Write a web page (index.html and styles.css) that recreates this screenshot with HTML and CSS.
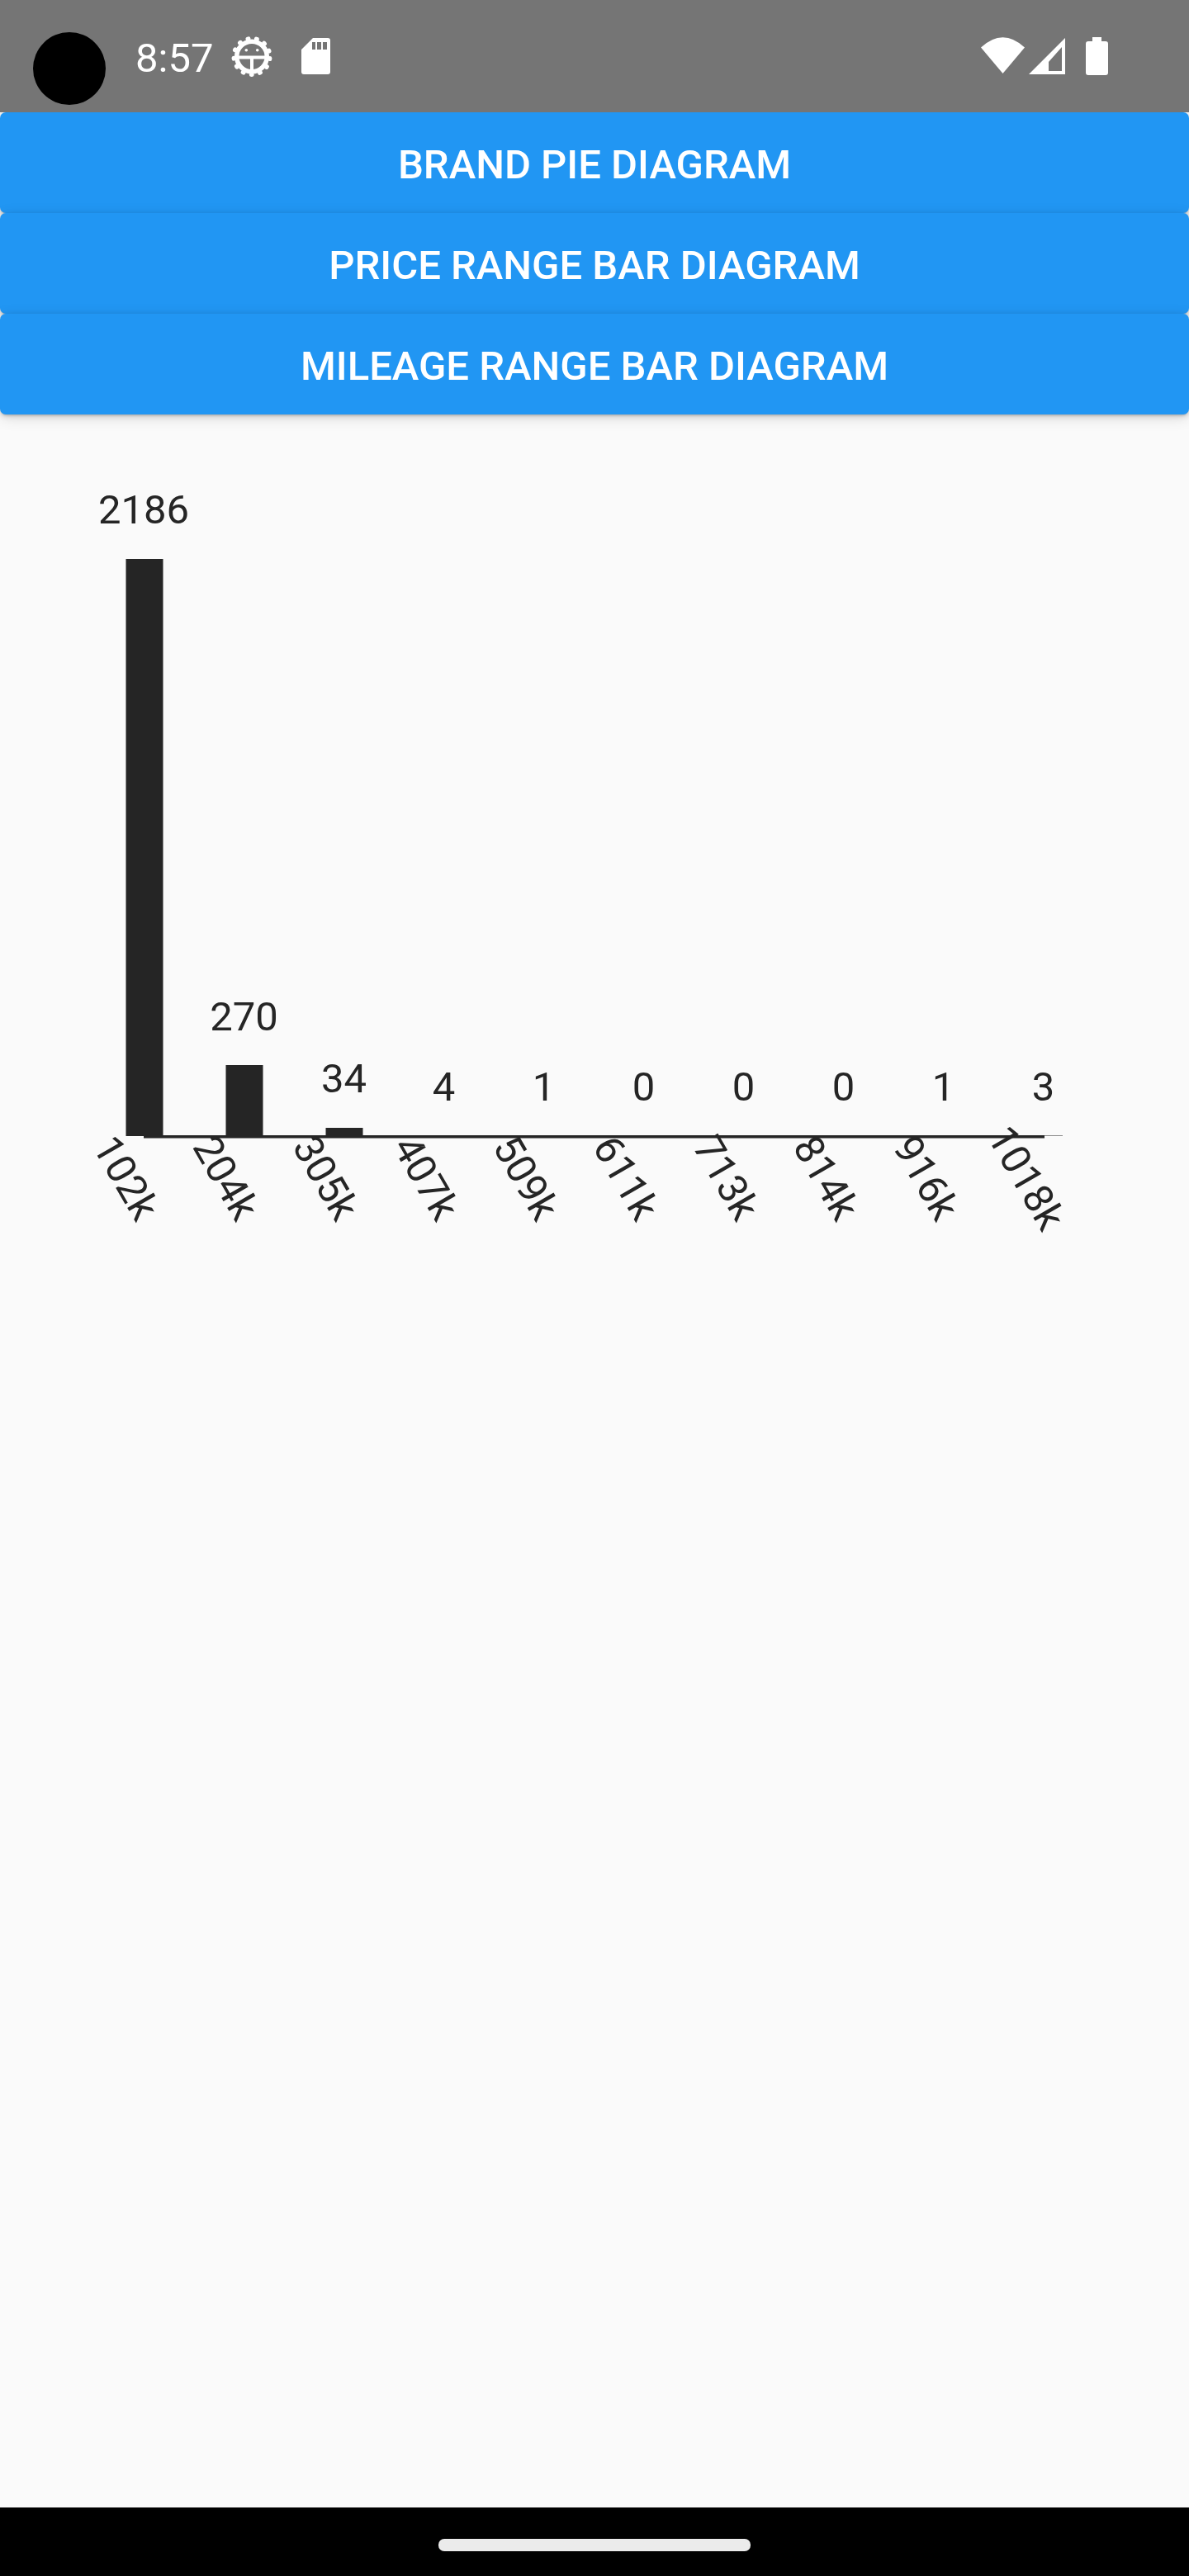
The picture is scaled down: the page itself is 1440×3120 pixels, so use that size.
FILE: index.html
```html
<!DOCTYPE html>
<html lang="en">
<head>
<meta charset="utf-8">
<title>Car statistics</title>
<link rel="stylesheet" href="styles.css">
</head>
<body>
<div class="screen">
  <header class="status-bar">
    <div class="status-left">
      <span class="time">8:57</span>
      <svg class="icon-debug" viewBox="0 0 50 50" width="50" height="50">
        <circle class="ring" cx="25" cy="24.500" r="18.300"/>
        <circle class="teeth" cx="25" cy="24.500" r="22"/>
        <path class="inner" d="M8 25.500H42M25 25.500V42"/>
        <circle class="dot" cx="18.300" cy="16.800" r="1.800"/>
        <circle class="dot" cx="31.700" cy="16.800" r="1.800"/>
      </svg>
      <svg class="icon-sd" viewBox="0 0 35 44" width="35" height="44">
        <path class="solid" fill-rule="evenodd" d="M14 0H32Q35 0 35 3V41Q35 44 32 44H3Q0 44 0 41V14ZM13 5V14H17V5ZM19 5V14H24V5ZM26 5V14H31V5Z"/>
      </svg>
    </div>
    <div class="status-right">
      <svg class="icon-wifi" viewBox="0 0 53 44" width="53" height="44">
        <path class="solid" d="M0 12.500Q26.500 -12 53 12.500L26.500 44Z"/>
      </svg>
      <svg class="icon-signal" viewBox="0 0 44 44" width="44" height="44">
        <path class="solid" fill-rule="evenodd" d="M44 0V44H0ZM40 11 24 29V40H40Z"/>
      </svg>
      <svg class="icon-battery" viewBox="0 0 27 46" width="27" height="46">
        <path class="solid" d="M8 0H19V5H24Q27 5 27 8V43Q27 46 24 46H3Q0 46 0 43V8Q0 5 3 5H8Z"/>
      </svg>
    </div>
    <div class="camera"></div>
  </header>

  <nav class="actions">
    <button class="action">BRAND PIE DIAGRAM</button>
    <button class="action">PRICE RANGE BAR DIAGRAM</button>
    <button class="action">MILEAGE RANGE BAR DIAGRAM</button>
  </nav>

  <main class="chart-area">
    <svg class="chart" viewBox="0 502 1440 2535" width="1440" height="2535">
      <rect class="bar" x="152.500" y="677" width="45" height="699"/>
      <rect class="bar" x="273.500" y="1290" width="45" height="86"/>
      <rect class="bar" x="394.500" y="1366" width="45" height="10"/>

      <rect class="axis-thin" x="1265" y="1375" width="22" height="1"/>
      <rect class="axis" x="174" y="1375" width="1091" height="3"/>
      <rect class="axis-edge" x="174" y="1378" width="1091" height="1"/>

      <text class="value" x="174" y="634">2186</text>
      <text class="value" x="295.500" y="1248">270</text>
      <text class="value" x="416.500" y="1323">34</text>
      <text class="value" x="537.500" y="1333">4</text>
      <text class="value" x="658.500" y="1333">1</text>
      <text class="value" x="779.500" y="1333">0</text>
      <text class="value" x="900.500" y="1333">0</text>
      <text class="value" x="1021.500" y="1333">0</text>
      <text class="value" x="1142.500" y="1333">1</text>
      <text class="value" x="1263.500" y="1333">3</text>

      <text class="tick" transform="translate(138 1435) rotate(60)">102k</text>
      <text class="tick" transform="translate(259 1435) rotate(60)">204k</text>
      <text class="tick" transform="translate(380 1435) rotate(60)">305k</text>
      <text class="tick" transform="translate(501.500 1435) rotate(60)">407k</text>
      <text class="tick" transform="translate(622.500 1435) rotate(60)">509k</text>
      <text class="tick" transform="translate(743.500 1435) rotate(60)">611k</text>
      <text class="tick" transform="translate(865 1435) rotate(60)">713k</text>
      <text class="tick" transform="translate(986 1435) rotate(60)">814k</text>
      <text class="tick" transform="translate(1107 1435) rotate(60)">916k</text>
      <text class="tick" transform="translate(1228.500 1435) rotate(60)">1018k</text>
    </svg>
  </main>

  <footer class="nav-bar">
    <div class="home-handle"></div>
  </footer>
</div>
</body>
</html>
```

FILE: styles.css
```css
* {
  box-sizing: border-box;
}

html,
body {
  margin: 0;
  padding: 0;
}

body {
  background: #fafafa;
  font-family: Roboto, "Liberation Sans", sans-serif;
}

.screen {
  width: 1440px;
  height: 3120px;
  display: flex;
  flex-direction: column;
  overflow: hidden;
}

/* status bar */
.status-bar {
  position: relative;
  flex: 0 0 136px;
  background: #757575;
  display: flex;
  justify-content: space-between;
  padding: 0 98px 0 164px;
  color: #fff;
}

.camera {
  position: absolute;
  left: 40px;
  top: 39px;
  width: 88px;
  height: 88px;
  border-radius: 50%;
  background: #000;
}

.status-left {
  display: flex;
  align-items: flex-start;
  padding-top: 44px;
}

.time {
  font-size: 49px;
  line-height: 50px;
  width: 116px;
  margin-top: 2px;
}

.icon-debug {
  margin-right: 35px;
}

.icon-sd {
  margin-top: 2px;
}

.status-right {
  display: flex;
  align-items: flex-start;
  padding-top: 45px;
}

.icon-wifi {
  margin-right: 5px;
}

.icon-signal {
  margin-top: 1px;
  margin-right: 25px;
}

.solid {
  fill: #fff;
}

.ring {
  fill: none;
  stroke: #fff;
  stroke-width: 5.500px;
}

.teeth {
  fill: none;
  stroke: #fff;
  stroke-width: 5px;
  stroke-linecap: round;
  stroke-dasharray: 1 9.633;
  stroke-dashoffset: -2.160px;
}

.inner {
  fill: none;
  stroke: #fff;
  stroke-width: 4px;
}

.dot {
  fill: #fff;
}

/* buttons */
.actions {
  display: flex;
  flex-direction: column;
}

.action {
  display: block;
  width: 100%;
  height: 122px;
  margin: 0;
  padding: 4px 0 0;
  border: 0;
  border-radius: 7px;
  background: #2196f3;
  color: #fff;
  font-family: Roboto, "Liberation Sans", sans-serif;
  font-size: 49px;
  font-weight: 500;
  text-align: center;
  box-shadow: 0 3px 3px -2px rgba(0, 0, 0, 0.2), 0 2px 7px 0 rgba(0, 0, 0, 0.14), 0 4px 18px 0 rgba(0, 0, 0, 0.12);
}

/* chart */
.chart-area {
  flex: 1 1 auto;
  min-height: 0;
}

.chart {
  display: block;
}

.bar,
.axis {
  fill: #252525;
}

.axis-thin {
  fill: #8a8a8a;
}

.axis-edge {
  fill: #8a8a8a;
}

.value,
.tick {
  fill: #252525;
  font-family: Roboto, "Liberation Sans", sans-serif;
  font-size: 49px;
  text-anchor: middle;
}

/* navigation bar */
.nav-bar {
  flex: 0 0 83px;
  background: #000;
  display: flex;
  justify-content: center;
  padding-top: 38px;
}

.home-handle {
  width: 378px;
  height: 15px;
  border-radius: 7px;
  background: #ebebeb;
}
```
